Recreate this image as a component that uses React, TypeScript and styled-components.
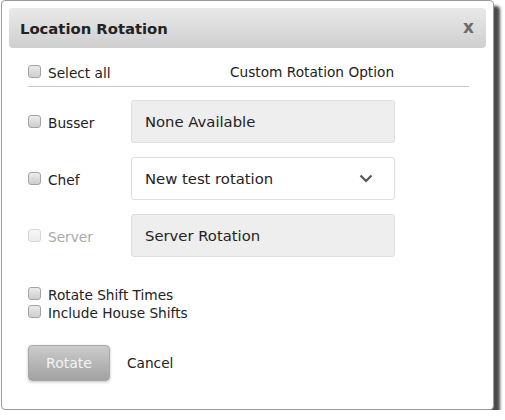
import styled, { createGlobalStyle } from 'styled-components'

const GlobalStyle = createGlobalStyle`
  body {
    margin: 0;
    background: #ffffff;
    font-family: 'DejaVu Sans', Verdana, sans-serif;
  }
`

interface RoleRow {
  name: string
  value: string
  kind: 'static' | 'select'
  disabled?: boolean
}

const roles: RoleRow[] = [
  { name: 'Busser', value: 'None Available', kind: 'static' },
  { name: 'Chef', value: 'New test rotation', kind: 'select' },
  { name: 'Server', value: 'Server Rotation', kind: 'static', disabled: true },
]

function Chevron() {
  return (
    <svg width="14" height="9" viewBox="0 0 14 9">
      <path d="M1.5 1.5 L7 7 L12.5 1.5" fill="none" stroke="#555" strokeWidth="2.2" />
    </svg>
  )
}

export default function App() {
  return (
    <>
      <GlobalStyle />
      <Dialog>
        <Header>
          <Title>Location Rotation</Title>
          <Close>x</Close>
        </Header>

        <Body>
          <TopRow>
            <SelectAll>
              <Box />
              <span>Select all</span>
            </SelectAll>
            <ColumnTitle>Custom Rotation Option</ColumnTitle>
          </TopRow>

          <Rows>
            {roles.map((r) => (
              <Row key={r.name}>
                <RoleLabel disabled={r.disabled}>
                  <Box disabled={r.disabled} />
                  <span>{r.name}</span>
                </RoleLabel>
                <Field kind={r.kind}>
                  <span>{r.value}</span>
                  {r.kind === 'select' && <Chevron />}
                </Field>
              </Row>
            ))}
          </Rows>

          <Options>
            <CheckLabel>
              <Box />
              <span>Rotate Shift Times</span>
            </CheckLabel>
            <CheckLabel>
              <Box />
              <span>Include House Shifts</span>
            </CheckLabel>
          </Options>

          <Actions>
            <RotateButton>Rotate</RotateButton>
            <CancelLink>Cancel</CancelLink>
          </Actions>
        </Body>
      </Dialog>
    </>
  )
}

const Dialog = styled.div`
  box-sizing: border-box;
  width: 493px;
  height: 410px;
  margin: 0 0 0 1px;
  background: #fff;
  border: 1px solid #9a9a9a;
  border-radius: 4px;
  box-shadow: 6px 6px 3px rgba(30, 30, 30, 0.8);
  padding: 7px;
  color: #222;
`

const Header = styled.div`
  height: 40px;
  border-radius: 4px;
  background: linear-gradient(#e9e9e9, #cfcfcf);
  display: flex;
  align-items: center;
  justify-content: space-between;
  padding: 0 12px 0 11px;
`

const Title = styled.h1`
  margin: 0;
  font-size: 14.8px;
  font-weight: 700;
  color: #222;
`

const Close = styled.span`
  font-size: 17px;
  font-weight: 700;
  color: #6a6a6a;
  margin-top: -3px;
`

const Body = styled.div`
  padding: 10px 17px 0 19px;
  font-size: 13.7px;
`

const TopRow = styled.div`
  display: flex;
  align-items: center;
  height: 28px;
  border-bottom: 1px solid #c8c8c8;
  margin-bottom: 13px;
`

const CheckLabel = styled.label<{ disabled?: boolean }>`
  display: flex;
  align-items: center;
  gap: 7px;
  color: ${(p) => (p.disabled ? '#aaa' : '#222')};
  line-height: 18px;
`

const SelectAll = styled(CheckLabel)`
  width: 202px;
  flex: none;
  padding-top: 2px;
`

const Box = styled.span<{ disabled?: boolean }>`
  box-sizing: border-box;
  width: 13px;
  height: 13px;
  border-radius: 3px;
  margin-top: -3px;
  border: 1px solid ${(p) => (p.disabled ? '#d6d6d6' : '#a4a4a4')};
  background: ${(p) =>
    p.disabled ? 'linear-gradient(#f7f7f7, #ececec)' : 'linear-gradient(#ececec, #cdcdcd)'};
  flex: none;
`

const ColumnTitle = styled.span`
  color: #222;
`

const Rows = styled.div`
  display: flex;
  flex-direction: column;
  gap: 14px;
`

const Row = styled.div`
  display: flex;
  align-items: center;
`

const RoleLabel = styled(CheckLabel)`
  width: 103px;
  flex: none;
  padding-top: 2px;
`

const Field = styled.div<{ kind: 'static' | 'select' }>`
  box-sizing: border-box;
  width: 264px;
  height: 43px;
  border: 1px solid #dedede;
  border-radius: 3px;
  background: ${(p) => (p.kind === 'select' ? '#fff' : '#eeeeee')};
  display: flex;
  align-items: center;
  justify-content: space-between;
  padding: 0 21px 0 13px;
  font-size: 14.8px;
  color: #222;
`

const Options = styled.div`
  margin-top: 29px;
  display: flex;
  flex-direction: column;
`

const Actions = styled.div`
  margin-top: 23px;
  display: flex;
  align-items: center;
  gap: 17px;
`

const RotateButton = styled.button`
  width: 82px;
  height: 36px;
  border: 1px solid #a8a8a8;
  border-radius: 4px;
  background: linear-gradient(#cbcbcb, #a2a2a2);
  box-shadow: 0 1px 3px rgba(0, 0, 0, 0.25);
  color: #f4f4f4;
  font-family: 'DejaVu Sans', Verdana, sans-serif;
  font-size: 14px;
  padding: 0;
`

const CancelLink = styled.span`
  font-size: 13.7px;
  color: #222;
`
